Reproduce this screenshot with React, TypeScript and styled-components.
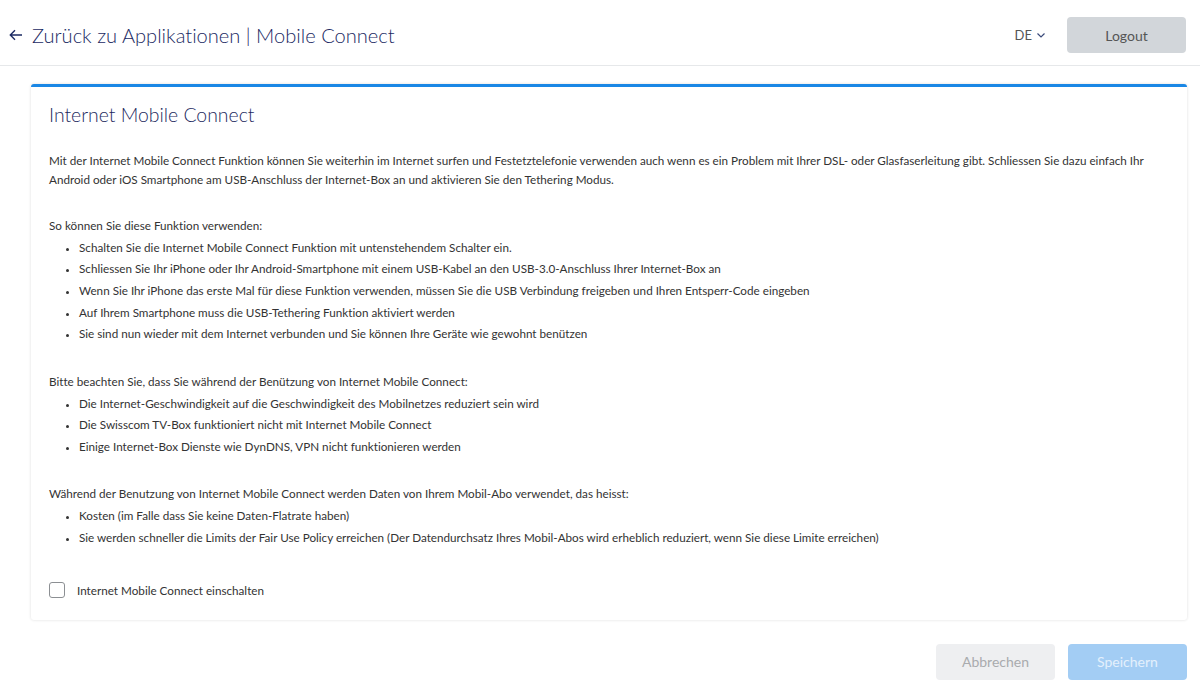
import styled, { createGlobalStyle } from "styled-components";

const GlobalStyle = createGlobalStyle`
  body {
    margin: 0;
    background: #ffffff;
    font-family: Lato, "Liberation Sans", sans-serif;
    font-variant-ligatures: none;
    color: #333333;
  }
`;

const Page = styled.div`
  width: 1200px;
  height: 692px;
  display: flex;
  flex-direction: column;
  overflow: hidden;
`;

const Header = styled.header`
  box-sizing: border-box;
  height: 66px;
  padding: 5px 14px 0 8px;
  border-bottom: 1px solid #e6e8ea;
  display: flex;
  align-items: center;
`;

const BackLink = styled.a`
  display: flex;
  align-items: center;
  gap: 8px;
  color: #1b2a63;
  font-size: 20.1px;
  font-weight: 300;
  text-decoration: none;
  cursor: pointer;
`;

const HeaderRight = styled.div`
  margin-left: auto;
  display: flex;
  align-items: center;
  gap: 21px;
`;

const LangSwitch = styled.div`
  display: flex;
  align-items: center;
  gap: 4px;
  font-size: 13px;
  color: #555;
`;

const Button = styled.button<{ $variant: "gray" | "light" | "primary" }>`
  width: 119px;
  height: 36px;
  border: none;
  border-radius: 4px;
  font-family: inherit;
  font-size: 14px;
  cursor: pointer;
  background: ${(p) =>
    p.$variant === "gray" ? "#d2d6da" : p.$variant === "light" ? "#eeeff1" : "#a3cdf4"};
  color: ${(p) =>
    p.$variant === "gray" ? "#555" : p.$variant === "light" ? "#a9abae" : "#e3f0fc"};
`;

const Main = styled.main`
  padding: 18px 13px 0 31px;
`;

const Card = styled.section`
  border-top: 3px solid #1a87e5;
  border-radius: 3px;
  box-shadow: 0 0 3px rgba(0, 0, 0, 0.14);
  padding: 13px 18px 20px 18px;
  background: #fff;
`;

const Title = styled.h2`
  margin: 0 0 21px;
  font-size: 19.4px;
  font-weight: 300;
  color: #1d2a5e;
  line-height: 30px;
`;

const Text = styled.p`
  margin: 0;
  font-size: 11.7px;
  line-height: 19px;
`;

const Section = styled.div`
  margin-top: 26.5px;
`;

const List = styled.ul`
  margin: 2px 0 0;
  padding-left: 30px;
  font-size: 11.7px;
  line-height: 21.7px;
  li::marker {
    font-size: 10px;
  }
`;

const CheckRow = styled.label`
  margin-top: 31px;
  display: flex;
  align-items: center;
  gap: 12px;
  font-size: 11.7px;
  line-height: 20px;
`;

const Box = styled.span`
  width: 14px;
  height: 14px;
  border: 1px solid #8c8f93;
  border-radius: 3px;
  background: #fff;
`;

const Footer = styled.div`
  display: flex;
  justify-content: flex-end;
  gap: 13px;
  padding: 24px 13px 0 0;
`;

export default function App() {
  return (
    <Page>
      <GlobalStyle />
      <Header>
        <BackLink>
          <svg width="16" height="16" viewBox="0 0 16 16" fill="none" stroke="#1b2a63" strokeWidth="1.4">
            <path d="M14 8H2.5M7 3.3L2.3 8L7 12.7" />
          </svg>
          Zurück zu Applikationen | Mobile Connect
        </BackLink>
        <HeaderRight>
          <LangSwitch>
            DE
            <svg width="10" height="10" viewBox="0 0 10 10" fill="none" stroke="#3a4a7a" strokeWidth="1.2">
              <path d="M1.5 3.5L5 7L8.5 3.5" />
            </svg>
          </LangSwitch>
          <Button $variant="gray">Logout</Button>
        </HeaderRight>
      </Header>
      <Main>
        <Card>
          <Title>Internet Mobile Connect</Title>
          <Text>
            Mit der Internet Mobile Connect Funktion können Sie weiterhin im Internet surfen und Festetztelefonie
            verwenden auch wenn es ein Problem mit Ihrer DSL- oder Glasfaserleitung gibt. Schliessen Sie dazu einfach Ihr
            Android oder iOS Smartphone am USB-Anschluss der Internet-Box an und aktivieren Sie den Tethering Modus.
          </Text>
          <Section>
            <Text>So können Sie diese Funktion verwenden:</Text>
            <List>
              <li>Schalten Sie die Internet Mobile Connect Funktion mit untenstehendem Schalter ein.</li>
              <li>
                Schliessen Sie Ihr iPhone oder Ihr Android-Smartphone mit einem USB-Kabel an den USB-3.0-Anschluss Ihrer
                Internet-Box an
              </li>
              <li>
                Wenn Sie Ihr iPhone das erste Mal für diese Funktion verwenden, müssen Sie die USB Verbindung freigeben und
                Ihren Entsperr-Code eingeben
              </li>
              <li>Auf Ihrem Smartphone muss die USB-Tethering Funktion aktiviert werden</li>
              <li>Sie sind nun wieder mit dem Internet verbunden und Sie können Ihre Geräte wie gewohnt benützen</li>
            </List>
          </Section>
          <Section>
            <Text>Bitte beachten Sie, dass Sie während der Benützung von Internet Mobile Connect:</Text>
            <List>
              <li>Die Internet-Geschwindigkeit auf die Geschwindigkeit des Mobilnetzes reduziert sein wird</li>
              <li>Die Swisscom TV-Box funktioniert nicht mit Internet Mobile Connect</li>
              <li>Einige Internet-Box Dienste wie DynDNS, VPN nicht funktionieren werden</li>
            </List>
          </Section>
          <Section>
            <Text>Während der Benutzung von Internet Mobile Connect werden Daten von Ihrem Mobil-Abo verwendet, das heisst:</Text>
            <List>
              <li>Kosten (im Falle dass Sie keine Daten-Flatrate haben)</li>
              <li>
                Sie werden schneller die Limits der Fair Use Policy erreichen (Der Datendurchsatz Ihres Mobil-Abos wird
                erheblich reduziert, wenn Sie diese Limite erreichen)
              </li>
            </List>
          </Section>
          <CheckRow>
            <Box />
            Internet Mobile Connect einschalten
          </CheckRow>
        </Card>
      </Main>
      <Footer>
        <Button $variant="light">Abbrechen</Button>
        <Button $variant="primary">Speichern</Button>
      </Footer>
    </Page>
  );
}
